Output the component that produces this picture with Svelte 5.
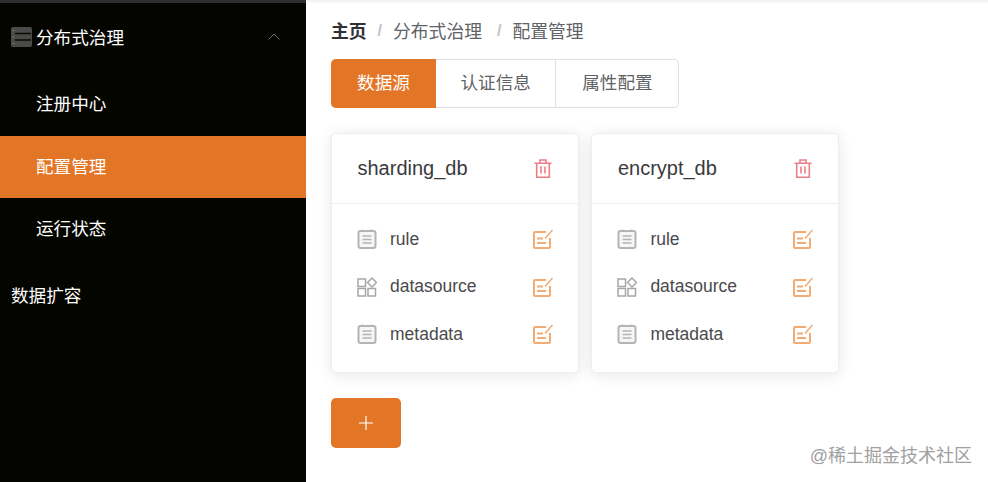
<script>
  const crumbs = ['分布式治理', '配置管理']
  const tabs = ['数据源', '认证信息', '属性配置']
  const subMenu = [
    { label: '注册中心', active: false },
    { label: '配置管理', active: true },
    { label: '运行状态', active: false }
  ]
  const cards = ['sharding_db', 'encrypt_db']
  const rows = [
    { label: 'rule', icon: 'doc' },
    { label: 'datasource', icon: 'grid' },
    { label: 'metadata', icon: 'doc' }
  ]
</script>

<div class="layout">
  <aside class="sidebar">
    <div class="menu-title">
      <svg class="menu-icon" width="22" height="20" viewBox="0 0 22 20">
        <rect x="0" y="0" width="21" height="20" rx="2" fill="#4a4a48" />
        <path d="M4 6.500h16M4 13h16" stroke="#0a0a08" stroke-width="1.600" />
        <path d="M1.500 3.500h2M1.500 10h2M1.500 16.500h2" stroke="#777" stroke-width="1" />
      </svg>
      <span class="menu-label">分布式治理</span>
      <svg class="chevron" width="12" height="7" viewBox="0 0 12 7">
        <path d="M.5 6.500 6 1l5.500 5.500" fill="none" stroke="#6a6a68" stroke-width="1" />
      </svg>
    </div>
    {#each subMenu as item}
      <div class="sub-item" class:active={item.active}>{item.label}</div>
    {/each}
    <div class="menu-plain">数据扩容</div>
  </aside>

  <main class="content">
    <nav class="breadcrumb">
      <strong>主页</strong>
      {#each crumbs as crumb}
        <span class="sep">/</span>
        <span class="crumb">{crumb}</span>
      {/each}
    </nav>

    <div class="tabs">
      {#each tabs as tab, i}
        <button class="tab" class:selected={i === 0}>{tab}</button>
      {/each}
    </div>

    <div class="cards">
      {#each cards as name}
        <section class="card">
          <header class="card-head">
            <span class="card-name">{name}</span>
            <svg width="18" height="19" viewBox="0 0 18 19" fill="none" stroke="#ee7d88" stroke-width="1.600">
              <path d="M.5 4.200h17M6 4V1h6v3M2.700 4.200v14h12.600v-14M7 7.500v7M11 7.500v7" />
            </svg>
          </header>
          <div class="card-body">
            {#each rows as row}
              <div class="row">
                {#if row.icon === 'doc'}
                  <svg class="row-icon" width="20" height="20" viewBox="0 0 20 20" fill="none" stroke="#b4b4b4">
                    <rect x="1.500" y="2" width="17" height="17" rx="2" fill="#f6f6f6" stroke-width="2" />
                    <path stroke-width="1.300" d="M5.500 .5v2.500M14.500 .5v2.500M5.500 7h9M5.500 10.500h9M5.500 14h9" />
                  </svg>
                {:else}
                  <svg class="row-icon" width="20" height="20" viewBox="0 0 20 20" fill="none" stroke="#a6a6a6" stroke-width="1.500">
                    <rect x="1" y="2" width="7.500" height="7.500" />
                    <path d="m15 1 4.500 4.500-4.500 4.500-4.500-4.500z" />
                    <rect x="1" y="11.500" width="7.500" height="7.500" />
                    <rect x="11" y="11.500" width="7.500" height="7.500" />
                  </svg>
                {/if}
                <span class="row-label">{row.label}</span>
                <svg width="20" height="20" viewBox="0 0 20 20" fill="none" stroke="#f2ab72" stroke-width="2">
                  <path d="M17 9v9a1 1 0 0 1-1 1H2a1 1 0 0 1-1-1V4a1 1 0 0 1 1-1h11" />
                  <path d="M4 9.500h6M4 14h9" />
                  <path stroke-width="1.500" d="m12 9.500 7.500-8.500" />
                </svg>
              </div>
            {/each}
          </div>
        </section>
      {/each}
    </div>

    <button class="add" aria-label="add">
      <svg width="16" height="16" viewBox="0 0 16 16">
        <path d="M8 1v14M1 8h14" stroke="#fff" stroke-width="1.200" />
      </svg>
    </button>
  </main>

  <div class="watermark">@稀土掘金技术社区</div>
</div>

<style>
  :global(body) {
    margin: 0;
    background: #fff;
  }

  .layout {
    position: relative;
    display: flex;
    width: 988px;
    height: 482px;
    overflow: hidden;
    font-family: "Liberation Sans", "Noto Sans CJK SC", sans-serif;
  }

  .sidebar {
    width: 306px;
    flex-shrink: 0;
    background: #050500;
    border-top: 3px solid #2e2e2c;
    box-sizing: border-box;
    color: #fff;
    font-size: 17.600px;
  }

  .menu-title {
    display: flex;
    align-items: center;
    height: 71px;
    box-sizing: border-box;
    padding: 0 26px 4px 11px;
  }

  .menu-icon {
    margin-right: 3px;
  }

  .menu-label {
    flex: 1;
  }

  .sub-item {
    display: flex;
    align-items: center;
    height: 62px;
    box-sizing: border-box;
    padding: 0 0 3px 36px;
  }

  .sub-item:nth-child(2) {
    padding-bottom: 6px;
  }

  .sub-item.active {
    background: #e37626;
  }

  .menu-plain {
    display: flex;
    align-items: center;
    height: 72px;
    box-sizing: border-box;
    padding: 0 0 4px 11px;
  }

  .content {
    flex: 1;
    padding: 0 25px;
    box-shadow: inset 0 4px 3px -2px #f0f0f0;
  }

  .breadcrumb {
    display: flex;
    align-items: center;
    height: 24px;
    margin-top: 18px;
    font-size: 17.800px;
    color: #606266;
  }

  .breadcrumb strong {
    color: #303133;
  }

  .crumb {
    padding-right: 4px;
  }

  .sep {
    margin: 2px 11px 0;
    color: #c0c4cc;
    font-weight: bold;
    font-size: 16px;
  }

  .tabs {
    display: flex;
    width: fit-content;
    margin-top: 17px;
  }

  .tab {
    height: 49px;
    padding: 0 24.500px 4px;
    border: 1px solid #dcdfe6;
    border-left: 0;
    background: #fff;
    color: #606266;
    font: inherit;
    font-size: 17.600px;
  }

  .tab.selected {
    width: 105px;
    padding: 0 0 4px 1px;
    background: #e37626;
    border-color: #e37626;
    color: #fff;
    border-radius: 5px 0 0 5px;
  }

  .tab:last-child {
    padding: 0 25.800px 4px;
    border-radius: 0 5px 5px 0;
  }

  .cards {
    display: flex;
    gap: 12.400px;
    margin-top: 25px;
  }

  .card {
    width: 248px;
    height: 240px;
    box-sizing: border-box;
    border: 1px solid #ebeef5;
    border-radius: 5px;
    box-shadow: 0 2px 15px rgba(0, 0, 0, 0.1);
    background: #fff;
  }

  .card-head {
    display: flex;
    align-items: center;
    justify-content: space-between;
    height: 69px;
    padding: 0 26px 0 25.500px;
    border-bottom: 1px solid #ebeef5;
  }

  .card-name {
    font-size: 20px;
    color: #3a3a3c;
  }

  .card-body {
    padding: 11.500px 25px 0;
  }

  .row {
    display: flex;
    align-items: center;
    height: 47.500px;
  }

  .row-icon {
    margin-right: 13px;
  }

  .row-label {
    flex: 1;
    font-size: 17.500px;
    color: #4a4a4c;
  }

  .add {
    display: flex;
    align-items: center;
    justify-content: center;
    width: 70px;
    height: 50px;
    margin-top: 25px;
    padding: 0;
    border: 0;
    border-radius: 5px;
    background: #e37626;
  }

  .watermark {
    position: absolute;
    right: 16px;
    top: 441px;
    font-size: 18px;
    color: #a0a0a0;
    white-space: nowrap;
  }
</style>
